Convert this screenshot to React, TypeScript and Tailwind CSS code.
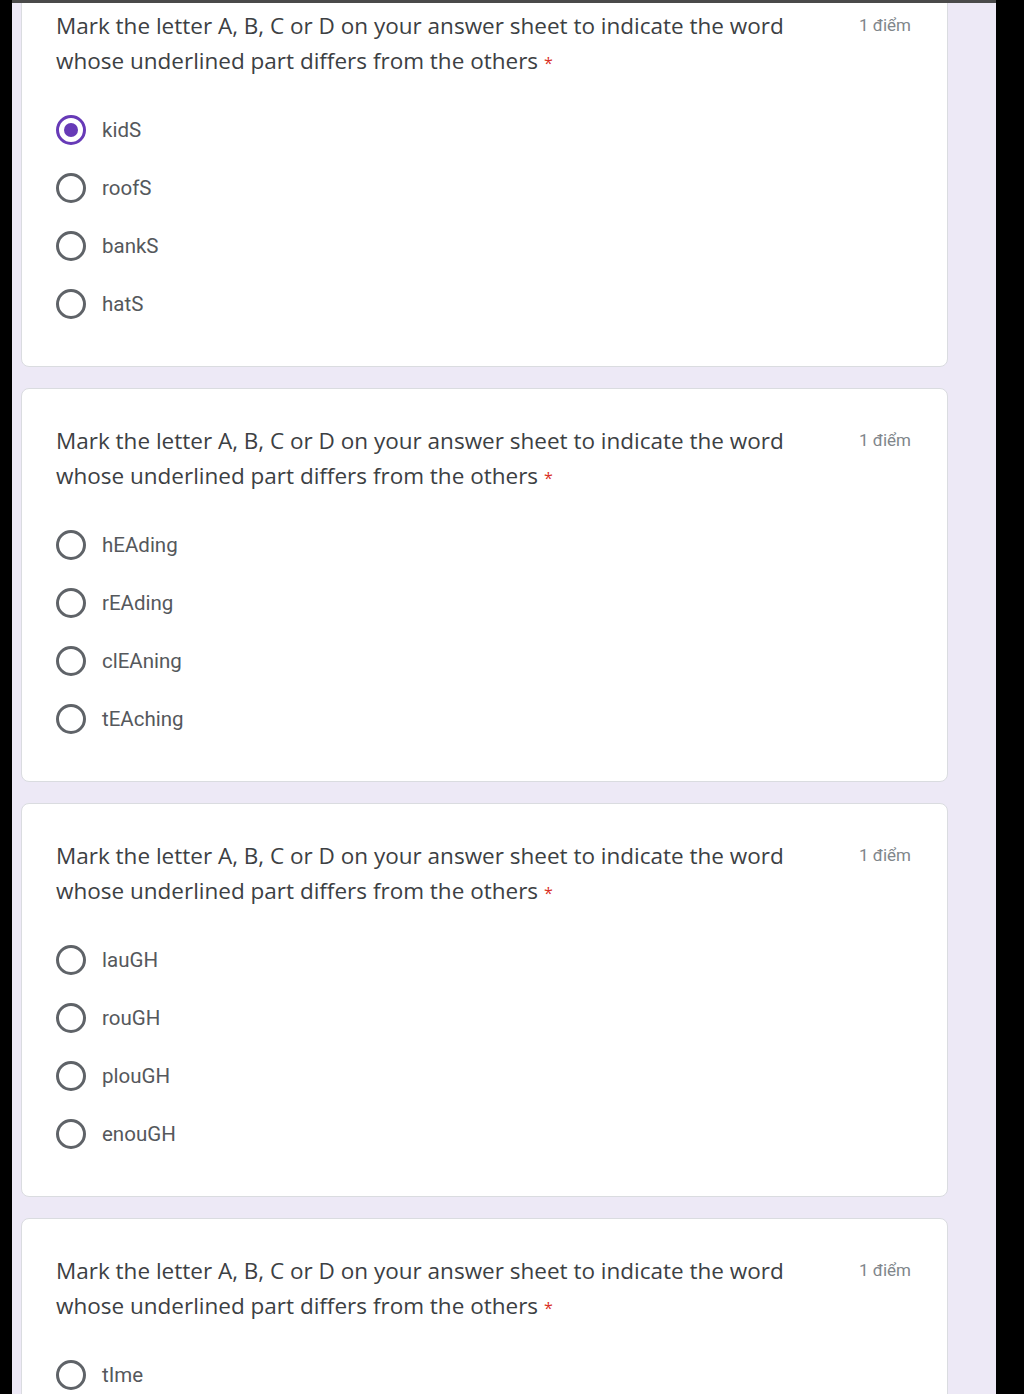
const QUESTIONS = [
  { options: ['kidS', 'roofS', 'bankS', 'hatS'], selected: 0 },
  { options: ['hEAding', 'rEAding', 'clEAning', 'tEAching'], selected: -1 },
  { options: ['lauGH', 'rouGH', 'plouGH', 'enouGH'], selected: -1 },
  { options: ['tIme', 'fIve', 'kIte', 'gIve'], selected: -1 },
];

const Radio = ({ checked }: { checked: boolean }) =>
  checked ? (
    <span className="flex h-[30px] w-[30px] shrink-0 items-center justify-center rounded-full border-[3px] border-[#673ab7]">
      <span className="h-[14px] w-[14px] rounded-full bg-[#673ab7]" />
    </span>
  ) : (
    <span className="h-[30px] w-[30px] shrink-0 rounded-full border-[3px] border-[#5f6368]" />
  );

const QuestionCard = ({ options, selected }: { options: string[]; selected: number }) => (
  <div className="rounded-lg border border-[#dadce0] bg-white pt-[34px] pr-[36px] pb-[33px] pl-[34px]">
    <div className="flex items-start gap-6">
      <p
        className="flex-1 text-[22.5px] leading-[35px] text-[#3c4043]"
        style={{ fontFamily: '"Open Sans", "Liberation Sans", sans-serif' }}
      >
        Mark the letter A, B, C or D on your answer sheet to indicate the word whose underlined part differs from the others{' '}
        <span className="text-[16px] text-[#d93025]">*</span>
      </p>
      <span
        className="w-[53px] shrink-0 text-right text-[17px] leading-[35px] text-[#80868b]"
        style={{ fontFamily: 'Roboto, "Liberation Sans", sans-serif' }}
      >
        1 điểm
      </span>
    </div>
    <ul className="mt-[20px] flex flex-col">
      {options.map((opt, i) => (
        <li key={opt} className="flex h-[58px] items-center gap-4">
          <Radio checked={i === selected} />
          <span
            className="text-[20.5px] text-[#55585c]"
            style={{ fontFamily: 'Roboto, "Liberation Sans", sans-serif' }}
          >
            {opt}
          </span>
        </li>
      ))}
    </ul>
  </div>
);

export default function App() {
  return (
    <div className="flex h-[1394px] w-[1024px] overflow-hidden bg-black">
      <div className="w-[12px] shrink-0 bg-black" />
      <div className="flex-1 overflow-hidden border-t-[3px] border-[#4a4a4a] bg-[#ede9f6] pr-[48px] pl-[9px]">
        <div className="-mt-[30px] flex flex-col gap-[21px]">
          {QUESTIONS.map((q, i) => (
            <QuestionCard key={i} options={q.options} selected={q.selected} />
          ))}
        </div>
      </div>
      <div className="w-[28px] shrink-0 bg-black" />
    </div>
  );
}
